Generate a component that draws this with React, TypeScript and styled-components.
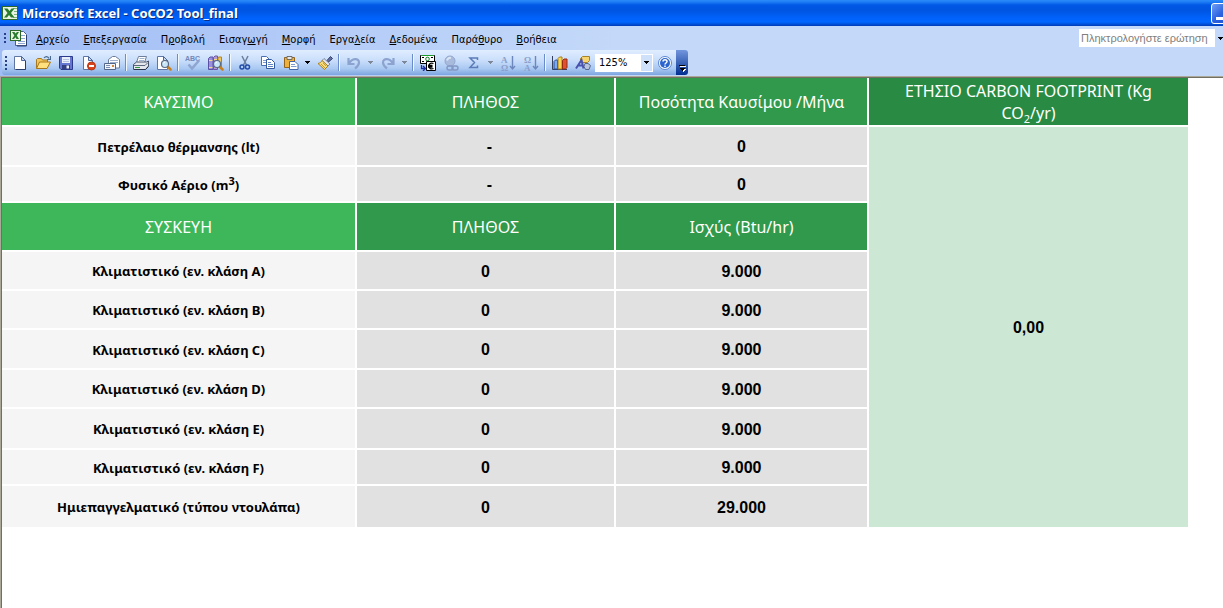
import React from "react";
import styled, { createGlobalStyle } from "styled-components";

const GlobalStyle = createGlobalStyle`
  * { box-sizing: border-box; }
  html, body, #root { height: 100%; }
  body { margin: 0; background: #fff; overflow: hidden; }
`;

const uiFont = `"DejaVu Sans Condensed", "DejaVu Sans", sans-serif`;
const cellFont = `"Noto Sans", "DejaVu Sans", sans-serif`;

const Window = styled.div`
  display: flex;
  flex-direction: column;
  min-height: 100%;
`;

const TitleBar = styled.header`
  display: flex;
  align-items: center;
  height: 26px;
  padding-left: 2px;
  overflow: hidden;
  background: linear-gradient(
    #2a8bfb 0, #1f7cf5 2px, #0058e4 5px, #0054e0 10px,
    #0062fb 18px, #0066ff 22px, #0052dc 24px, #003bb8 26px
  );
`;

const Title = styled.h1`
  flex: 1;
  margin: 0 0 0 4px;
  color: #fff;
  font: 700 13px/18px ${cellFont};
  text-shadow: 1px 1px 0 #0a2a80;
  white-space: nowrap;
`;

const Minimize = styled.button`
  flex: none;
  width: 21px;
  height: 21px;
  margin-right: -9px;
  padding: 0;
  border: 1px solid #fff;
  border-radius: 3px;
  background: linear-gradient(135deg, #6f9ff5, #2a62e0 50%, #1c4fd0);
  svg { display: block; }
`;

const Bars = styled.div`
  padding-bottom: 1px;
  background: linear-gradient(90deg, #a1bdf5, #c4d9f9 620px);
`;

const MenuBar = styled.nav`
  display: flex;
  align-items: center;
  height: 24px;
  padding-left: 4px;
`;

const Grip = styled.span<{ $dots: number }>`
  flex: none;
  width: 2px;
  height: ${(p) => p.$dots * 4 - 2}px;
  background: repeating-linear-gradient(#27408a 0 2px, transparent 2px 4px);
`;

const MenuIcon = styled.span`
  flex: none;
  width: 19px;
  height: 19px;
  margin: 0 8px 0 3px;
  svg { display: block; }
`;

const MenuList = styled.ul`
  display: flex;
  gap: 14px;
  flex: 1;
  margin: 0;
  padding: 0;
  list-style: none;
`;

const MenuButton = styled.button`
  padding: 0;
  border: 0;
  background: none;
  color: #000;
  font: 11px/16px ${uiFont};
  white-space: nowrap;
`;

const Question = styled.div`
  display: flex;
  flex: none;
  width: 144px;
  height: 18px;
`;

const QuestionInput = styled.input`
  flex: 1;
  min-width: 0;
  height: 18px;
  padding: 0 2px;
  border: 0;
  background: #fff;
  font: 11px/18px "Liberation Sans", Arial, sans-serif;
  &::placeholder { color: #808080; opacity: 1; }
`;

const QuestionDrop = styled.button`
  display: flex;
  align-items: center;
  justify-content: flex-end;
  width: 8px;
  padding: 0;
  border: 0;
  background: none;
`;

const ToolRow = styled.div`
  display: flex;
  height: 25px;
  padding-left: 2px;
`;

const ToolBar = styled.div`
  display: flex;
  align-items: center;
  height: 25px;
  padding-left: 3px;
  border-radius: 3px 0 0 3px;
  background: linear-gradient(#e0edff, #cbdffb 40%, #a9c8f2 75%, #7da5e0);
`;

const ToolButton = styled.button<{ $first?: boolean }>`
  display: flex;
  align-items: center;
  justify-content: center;
  flex: none;
  width: 23px;
  height: 22px;
  margin-left: ${(p) => (p.$first ? 1 : 0)}px;
  padding: 0;
  border: 0;
  background: none;
`;

const DropButton = styled(ToolButton)`
  width: 11px;
`;

const Separator = styled.span`
  flex: none;
  width: 2px;
  height: 17px;
  margin: 0 2px;
  border-left: 1px solid #6a8ccb;
  border-right: 1px solid #f1f9ff;
`;

const Zoom = styled.div`
  display: flex;
  align-items: stretch;
  flex: none;
  width: 58px;
  height: 18px;
  margin-left: 1px;
  padding: 1px;
  background: #fff;
`;

const ZoomSelect = styled.select`
  flex: 1;
  min-width: 0;
  height: 16px;
  padding: 0 0 0 3px;
  border: 0;
  appearance: none;
  color: #000;
  background: #fff;
  font: 11px/16px ${uiFont};
`;

const ZoomArrow = styled.span`
  display: flex;
  align-items: center;
  justify-content: center;
  width: 11px;
  background: #cfe0fa;
`;

const BarEnd = styled.button`
  display: flex;
  align-items: flex-end;
  justify-content: center;
  width: 12px;
  height: 25px;
  padding: 0 0 3px;
  border: 0;
  border-radius: 0 3px 3px 0;
  background: linear-gradient(#7396dd, #3c65b8 50%, #002f92);
`;

const Sheet = styled.main`
  flex: 1;
  padding-right: 35px;
  border-top: 1px solid #aca899;
  border-left: 1px solid #aca899;
  box-shadow: inset 1px 1px 0 #716f64;
`;

const SheetInner = styled.div`
  padding: 1px 0 0 1px;
`;

const Grid = styled.table`
  width: 100%;
  table-layout: fixed;
  border-collapse: separate;
  border-spacing: 0;
`;

const Column = styled.col<{ $width?: number }>`
  width: ${(p) => (p.$width ? `${p.$width}px` : "auto")};
`;

const Row = styled.tr<{ $height: number }>`
  height: ${(p) => p.$height}px;
`;

const shades = { light: "#3eb75a", medium: "#31994b", dark: "#298b43" };

const HeadCell = styled.th<{ $shade: keyof typeof shades; $last?: boolean }>`
  padding: 0;
  border: solid #fff;
  border-width: 0 ${(p) => (p.$last ? 0 : 2)}px 2px 0;
  background: ${(p) => shades[p.$shade]};
  color: #fff;
  font: 400 16px/22px ${cellFont};
  text-align: center;
  sub { font-size: 11px; line-height: 0; }
`;

const NameCell = styled.th`
  padding: 1px 0 0;
  border: solid #fff;
  border-width: 0 2px 2px 0;
  background: #f5f5f5;
  color: #000;
  font: 700 13px/18px ${cellFont};
  text-align: center;
  sup { font-size: 11px; line-height: 0; }
`;

const ValueCell = styled.td<{ $dash?: boolean }>`
  padding: 2px 0 0 ${(p) => (p.$dash ? 8 : 0)}px;
  border: solid #fff;
  border-width: 0 2px 2px 0;
  background: #e1e1e1;
  color: #000;
  font: 700 16px/20px "Liberation Sans", Arial, sans-serif;
  text-align: center;
`;

const TotalCell = styled(ValueCell)`
  border-right-width: 0;
  background: #cde7d5;
`;

const Svg = ({ size = 16, children }: { size?: number; children: React.ReactNode }) => (
  <svg width={size} height={size} viewBox={`0 0 ${size} ${size}`} aria-hidden="true">{children}</svg>
);

const Arrow = ({ color = "#000" }: { color?: string }) => (
  <svg width="5" height="3" viewBox="0 0 5 3" shapeRendering="crispEdges" aria-hidden="true">
    <path d="M0 0h5v1H4v1H3v1H2V2H1V1H0z" fill={color} />
  </svg>
);

const ExcelMark = () => (
  <>
    <rect x=".5" y="1.5" width="15" height="13" fill="#eaf4e4" stroke="#2c6a2a" />
    <path d="M11 3.500h4M12 6.500h3M12 9.500h3M11 12.500h4" stroke="#7db777" />
    <path d="M2 3.500h3.500L7.500 6l2-2.500h3L9 8l3.500 4.500H9L7 10l-2 2.500H2L5.500 8z" fill="#2b7d2e" />
  </>
);

const Page = () => (
  <>
    <path d="M2.500 1.500h7l4 4v9h-11z" fill="#fff" stroke="#5f76a5" />
    <path d="M4 14.500h9.500V6" fill="none" stroke="#2b3f6e" />
    <path d="M9.500 1.500v4h4z" fill="#c5d6f2" stroke="#4f6796" />
  </>
);

const Lens = () => (
  <>
    <path d="m11.500 11.500 3 3" stroke="#c97f1c" strokeWidth="2.500" strokeLinecap="round" />
    <circle cx="9" cy="9" r="3.500" fill="#c9e6f8" stroke="#586a84" strokeWidth="1.200" />
    <path d="M7.500 8.500A2 2 0 0 1 9 7" stroke="#fff" fill="none" />
  </>
);

const icons: Record<string, React.ReactNode> = {
  new: <Page />,
  open: (
    <>
      <path d="M1.500 13.500v-9l1-1h4l1 1.500h5v2" fill="#f3c65d" stroke="#a97a1d" />
      <path d="M1.500 13.500 4.500 7h11l-3.500 6.500z" fill="#ffdf7e" stroke="#a8761a" />
      <path d="M9 3c1.500-2 4-2 5 .5M15.500 1v3.500H12" fill="none" stroke="#49698f" strokeWidth="1.200" />
    </>
  ),
  save: (
    <>
      <path d="M1.500 1.500h13v13H3l-1.500-1.500z" fill="#6675d0" stroke="#2c3a8c" />
      <path d="M4 2h8v6H4z" fill="#e9effb" />
      <path d="M5 4.500h6M5 6.500h6" stroke="#b5c2e2" />
      <path d="M4 10h8v4H4z" fill="#343f82" />
      <path d="M8.500 10.500h2.500v3H8.500z" fill="#e9effb" />
    </>
  ),
  permission: (
    <>
      <path d="M2.500 1.500h5l4 4v9h-9z" fill="#fff" stroke="#5f76a5" />
      <path d="M7.500 1.500v4h4z" fill="#c5d6f2" stroke="#4f6796" />
      <circle cx="10.500" cy="11" r="4" fill="#d9421c" stroke="#b8350f" />
      <path d="M8 10h5v2H8z" fill="#fff" />
    </>
  ),
  mail: (
    <>
      <path d="M4.500 8V4.500l4-3h3l4 3V13h-5" fill="#fff" stroke="#6d7c99" />
      <path d="M6 5.500h8M6 7.500h8" stroke="#9fb0cd" />
      <path d="M.5 8.500h11v6H.5z" fill="#f2f6fd" stroke="#54658a" />
      <path d="M2 10.500h4M2 12.500h4" stroke="#7b8db2" />
      <path d="M8 10h2v2H8z" fill="#d88a38" />
    </>
  ),
  print: (
    <>
      <path d="M5.500 1.500h8l-2 6H3.500z" fill="#fff" stroke="#6e7f9c" />
      <path d="M6.500 3.500h5M6 5.500h5" stroke="#9fb2d0" />
      <path d="m.5 9.500 3-2.500h10l2-1v5l-3 3.500H.5z" fill="#e4e8ed" stroke="#47536a" />
      <path d="M1 10.500h11l3-3" stroke="#5b6880" fill="none" />
      <path d="M2 12h5v1H2z" fill="#2b9a3d" />
      <path d="M1 14.500h11.500l3-3" stroke="#27324a" fill="none" />
    </>
  ),
  preview: (
    <>
      <path d="M1.500 1.500h6l4 4v9h-10z" fill="#fff" stroke="#5f76a5" />
      <path d="M7.500 1.500v4h4z" fill="#c5d6f2" stroke="#4f6796" />
      <Lens />
    </>
  ),
  spelling: (
    <>
      <text x="0" y="6" fontFamily="Liberation Sans, sans-serif" fontSize="7" fontWeight="700" fill="#7088ba">ABC</text>
      <path d="m3.500 9.500 3.500 4L14 5.500" fill="none" stroke="#8ea5d2" strokeWidth="2.500" />
    </>
  ),
  research: (
    <>
      <path d="M.5 3.500 2 2h3v12.500H.5z" fill="#9b90dc" stroke="#5a50a6" />
      <path d="M5.500 2.500 7 1h2.500v13.500h-4z" fill="#b39ad4" stroke="#6b56a8" />
      <path d="M10 2.500 11 2h2.500v10H10z" fill="#f0c65e" stroke="#b18526" />
      <path d="M1 5.500h3.500M1 12.500h3.500M6 4.500h3" stroke="#f3dc7f" />
      <Lens />
    </>
  ),
  cut: (
    <>
      <path d="m5 1 4.500 9M11 1 6.500 10" stroke="#6d7f9f" strokeWidth="1.500" />
      <circle cx="5" cy="12" r="2" fill="none" stroke="#234ba8" strokeWidth="1.500" />
      <circle cx="10.500" cy="12" r="2" fill="none" stroke="#234ba8" strokeWidth="1.500" />
    </>
  ),
  copy: (
    <>
      <path d="M1.500 1.500h5l3 3v6h-8z" fill="#fff" stroke="#4a70b4" />
      <path d="M3 5.500h4M3 7.500h4" stroke="#7c9bd3" />
      <path d="M6.500 4.500h5l3 3v6h-8z" fill="#fff" stroke="#34589e" />
      <path d="M8 7.500h3M8 9.500h5M8 11.500h5" stroke="#5d82c6" />
    </>
  ),
  paste: (
    <>
      <path d="M1.500 2.500h10v10h-10z" fill="#eeb23a" stroke="#94631a" />
      <path d="M4 1.500h5v3H4z" fill="#e8e8e8" stroke="#6e6e6e" />
      <path d="M6.500 6.500h5.500l3 3v5H6.500z" fill="#fff" stroke="#4467a8" />
      <path d="M8 9.500h4M8 11.500h5.500" stroke="#7e9bd0" />
    </>
  ),
  painter: (
    <>
      <path d="m10 5.500 3.500-4 2 2-4 3.500z" fill="#6470a2" stroke="#33406b" />
      <path d="m7 3.500 6 5.500-2 2L5 5.500z" fill="#e2e5ec" stroke="#67718b" strokeWidth=".8" />
      <path d="M5 5.500 11 11 7.500 14.500 1 8.500C3 8 4.500 7 5 5.500z" fill="#f6dc7a" stroke="#a98021" />
      <path d="m4 9 4 4M6 8l3 3" stroke="#c59c31" />
    </>
  ),
  undo: (
    <path d="M2.500 3v6h6M3 8.500C6 3 13 2.500 13 7.500c0 3-2 4.500-4 6" fill="none" stroke="#8da3cf" strokeWidth="2.200" />
  ),
  redo: (
    <path d="M13.500 3v6h-6M13 8.500C10 3 3 2.500 3 7.500c0 3 2 4.500 4 6" fill="none" stroke="#8da3cf" strokeWidth="2.200" />
  ),
  euro: (
    <>
      <path d="M.5.500h14v8H.5z" fill="#fff" stroke="#000" />
      <path d="M1 0h13v1H1z" fill="#1d9a2c" />
      <circle cx="7.500" cy="4" r="1.800" fill="none" stroke="#177b2a" />
      <path d="M2 2.500h2M11 2.500h2M2 6.500h2" stroke="#000" />
      <path d="M6.500 6.500h9v9h-9z" fill="#fff" stroke="#000" />
      <path d="M13.500 8.500c-3-1.200-4.500.5-4.500 2.500s1.500 3.700 4.500 2.500M8 10.500h4.500M8 12h4.500" fill="none" stroke="#000" strokeWidth="1.300" />
      <path d="M1.500 10v3.500H5M3 11l2.500 2.500L3 16" fill="none" stroke="#1c2fa8" strokeWidth="1.300" />
    </>
  ),
  link: (
    <>
      <circle cx="7" cy="6" r="5" fill="#a9bbdc" stroke="#93a6cd" />
      <path d="M4 5.500C4.500 3.500 6 2.500 8 3" stroke="#dbe5f6" strokeWidth="2" fill="none" />
      <rect x="4" y="11" width="6" height="4" rx="2" fill="none" stroke="#8297c2" strokeWidth="1.400" />
      <rect x="9" y="11" width="6" height="4" rx="2" fill="none" stroke="#8297c2" strokeWidth="1.400" />
    </>
  ),
  sum: (
    <path d="M11.500 5V3H4l4.500 4.500L4 12.500h7.500v-2" fill="none" stroke="#5c7bb8" strokeWidth="1.500" />
  ),
  sortAsc: (
    <>
      <text x="1" y="7.500" fontFamily="Liberation Serif, serif" fontSize="9" fontWeight="700" fill="#8a9fcb">Α</text>
      <text x="1" y="15.500" fontFamily="Liberation Serif, serif" fontSize="9" fontWeight="700" fill="#8a9fcb">Ω</text>
      <path d="M12.500 1v12M10 11l2.500 3 2.500-3" fill="none" stroke="#6d87bd" strokeWidth="1.400" />
    </>
  ),
  sortDesc: (
    <>
      <text x="1" y="7.500" fontFamily="Liberation Serif, serif" fontSize="9" fontWeight="700" fill="#8a9fcb">Ω</text>
      <text x="1" y="15.500" fontFamily="Liberation Serif, serif" fontSize="9" fontWeight="700" fill="#8a9fcb">Α</text>
      <path d="M12.500 1v12M10 11l2.500 3 2.500-3" fill="none" stroke="#6d87bd" strokeWidth="1.400" />
    </>
  ),
  chart: (
    <>
      <path d="M.5 1v13.500H15" fill="none" stroke="#33415f" />
      <path d="M2 6.500 3.500 5H5.500v9H2z" fill="#7fa9ee" stroke="#274f9e" />
      <path d="M6 3.500 7.500 2H10v12H6z" fill="#f9d755" stroke="#a97e17" />
      <path d="M10.500 5.500 12 4h3v8.500L13.500 14h-3z" fill="#e2512f" stroke="#962b12" />
    </>
  ),
  drawing: (
    <>
      <path d="m5.500 3.500 2-2h7v4l-2 2h-7z" fill="#f6d571" stroke="#a88227" />
      <path d="M10 8.500h3l2.500 2-1.500 4h-3.500l-1.500-3z" fill="#b9c5de" stroke="#56668f" />
      <path d="M1 13.500 6.500 5l2 8.500M3.500 10.500h5" fill="none" stroke="#4a52b0" strokeWidth="2" />
    </>
  ),
  help: (
    <>
      <circle cx="8" cy="8" r="6.500" fill="#fff" stroke="#5a86d4" />
      <circle cx="8" cy="8" r="5" fill="#2b66cf" />
      <path d="M6 6.500C6 4 10 4 10 6.500 10 8 8 8 8 9.500M8 10.500V12" fill="none" stroke="#fff" strokeWidth="1.500" />
    </>
  ),
};

type Tool = { kind: "button" | "drop" | "sep"; icon?: string; label?: string; muted?: boolean };
const b = (icon: string, label: string): Tool => ({ kind: "button", icon, label });
const d = (label: string, muted = false): Tool => ({ kind: "drop", label, muted });
const sep: Tool = { kind: "sep" };

const tools: Tool[] = [
  b("new", "Δημιουργία"), b("open", "Άνοιγμα"), b("save", "Αποθήκευση"), b("permission", "Δικαιώματα"), b("mail", "Αποστολή"), sep,
  b("print", "Εκτύπωση"), b("preview", "Προεπισκόπηση"), sep,
  b("spelling", "Ορθογραφία"), b("research", "Έρευνα"), sep,
  b("cut", "Αποκοπή"), b("copy", "Αντιγραφή"), b("paste", "Επικόλληση"), d("Επιλογές επικόλλησης"), b("painter", "Πινέλο μορφοποίησης"), sep,
  b("undo", "Αναίρεση"), d("Λίστα αναίρεσης", true), b("redo", "Επανάληψη"), d("Λίστα επανάληψης", true), sep,
  b("euro", "Μετατροπή σε ευρώ"), b("link", "Υπερ-σύνδεση"), b("sum", "Άθροιση"), d("Συναρτήσεις", true),
  b("sortAsc", "Αύξουσα ταξινόμηση"), b("sortDesc", "Φθίνουσα ταξινόμηση"), sep,
  b("chart", "Γράφημα"), b("drawing", "Σχεδίαση"),
];

/* Each entry is the text before, at and after the underlined access key. */
const menus = [
  ["", "Α", "ρχείο"], ["", "Ε", "πεξεργασία"], ["Π", "ρ", "οβολή"], ["Εισαγ", "ω", "γή"], ["", "Μ", "ορφή"],
  ["Εργα", "λ", "εία"], ["", "Δ", "εδομένα"], ["Παρά", "θ", "υρο"], ["", "Β", "οήθεια"],
];

const fuels = [
  { name: <>Πετρέλαιο θέρμανσης (lt)</>, count: "-", amount: "0", height: 40 },
  { name: <>Φυσικό Αέριο (m<sup>3</sup>)</>, count: "-", amount: "0", height: 36 },
];

const devices = [
  { name: "Κλιματιστικό (εν. κλάση A)", power: "9.000", height: 39 },
  { name: "Κλιματιστικό (εν. κλάση B)", power: "9.000", height: 39 },
  { name: "Κλιματιστικό (εν. κλάση C)", power: "9.000", height: 40 },
  { name: "Κλιματιστικό (εν. κλάση D)", power: "9.000", height: 39 },
  { name: "Κλιματιστικό (εν. κλάση E)", power: "9.000", height: 41 },
  { name: "Κλιματιστικό (εν. κλάση F)", power: "9.000", height: 36 },
  { name: "Ημιεπαγγελματικό (τύπου ντουλάπα)", power: "29.000", height: 43 },
];

export default function App() {
  return (
    <Window>
      <GlobalStyle />
      <TitleBar>
        <Svg><ExcelMark /></Svg>
        <Title>Microsoft Excel - CoCO2 Tool_final</Title>
        <Minimize aria-label="Ελαχιστοποίηση">
          <Svg size={19}><path d="M4 13h7v3H4z" fill="#fff" /></Svg>
        </Minimize>
      </TitleBar>
      <Bars>
        <MenuBar>
          <Grip $dots={3} />
          <MenuIcon>
            <Svg size={19}>
              <path d="M6.500 2.500h8l3 3v11h-11z" fill="#fff" stroke="#4a5f92" />
              <path d="M12 6.500h4M12 9.500h4M9 12.500h7M9 14.500h7" stroke="#8da6d6" />
              <path d="M17.500 6v11H8" fill="none" stroke="#2b3f6e" />
              <rect x="1.500" y="1.500" width="10" height="10" fill="#eaf4e4" stroke="#2c6a2a" />
              <path d="M3 3h2.500l1 1.500L8 3h2L7.800 6.500 10 10H7.500l-1-1.700L5 10H3l2.300-3.500z" fill="#2b7d2e" />
            </Svg>
          </MenuIcon>
          <MenuList>
            {menus.map(([before, key, after]) => (
              <li key={before + key + after}>
                <MenuButton>{before}<u>{key}</u>{after}</MenuButton>
              </li>
            ))}
          </MenuList>
          <Question>
            <QuestionInput aria-label="Ερώτηση" placeholder="Πληκτρολογήστε ερώτηση" />
            <QuestionDrop aria-label="Πρόσφατες ερωτήσεις"><Arrow /></QuestionDrop>
          </Question>
        </MenuBar>
        <ToolRow>
          <ToolBar>
            <Grip $dots={4} />
            {tools.map((tool, i) => {
              if (tool.kind === "sep") return <Separator key={i} />;
              if (tool.kind === "drop")
                return <DropButton key={i} aria-label={tool.label}><Arrow color={tool.muted ? "#7d8798" : "#000"} /></DropButton>;
              return <ToolButton key={i} $first={i === 0} aria-label={tool.label}><Svg>{icons[tool.icon!]}</Svg></ToolButton>;
            })}
            <Zoom>
              <ZoomSelect aria-label="Ζουμ" defaultValue="125%">
                <option>125%</option>
              </ZoomSelect>
              <ZoomArrow><Arrow /></ZoomArrow>
            </Zoom>
            <ToolButton aria-label="Βοήθεια"><Svg>{icons.help}</Svg></ToolButton>
          </ToolBar>
          <BarEnd aria-label="Επιλογές γραμμής εργαλείων">
            <svg width="7" height="7" viewBox="0 0 7 7" shapeRendering="crispEdges" aria-hidden="true">
              <path d="M1 1h6v1H1zM2 4h5v1H6v1H5v1H4V6H3V5H2z" fill="#fff" />
              <path d="M0 0h6v1H0zM1 3h5v1H5v1H4v1H3V5H2V4H1z" fill="#000" />
            </svg>
          </BarEnd>
        </ToolRow>
      </Bars>
      <Sheet>
        <SheetInner>
          <Grid>
            <colgroup>
              <Column $width={355} />
              <Column $width={259} />
              <Column $width={253} />
              <Column />
            </colgroup>
            <tbody>
              <Row $height={49}>
                <HeadCell scope="col" $shade="light">ΚΑΥΣΙΜΟ</HeadCell>
                <HeadCell scope="col" $shade="medium">ΠΛΗΘΟΣ</HeadCell>
                <HeadCell scope="col" $shade="medium">Ποσότητα Καυσίμου /Μήνα</HeadCell>
                <HeadCell scope="col" $shade="dark" $last>
                  ΕΤΗΣΙΟ CARBON FOOTPRINT (Kg<br />CO<sub>2</sub>/yr)
                </HeadCell>
              </Row>
              {fuels.map((fuel, i) => (
                <Row key={i} $height={fuel.height}>
                  <NameCell scope="row">{fuel.name}</NameCell>
                  <ValueCell $dash>{fuel.count}</ValueCell>
                  <ValueCell>{fuel.amount}</ValueCell>
                  {i === 0 && <TotalCell rowSpan={fuels.length + devices.length + 1}>0,00</TotalCell>}
                </Row>
              ))}
              <Row $height={49}>
                <HeadCell scope="col" $shade="light">ΣΥΣΚΕΥΗ</HeadCell>
                <HeadCell scope="col" $shade="medium">ΠΛΗΘΟΣ</HeadCell>
                <HeadCell scope="col" $shade="medium">Ισχύς (Btu/hr)</HeadCell>
              </Row>
              {devices.map((device) => (
                <Row key={device.name} $height={device.height}>
                  <NameCell scope="row">{device.name}</NameCell>
                  <ValueCell>0</ValueCell>
                  <ValueCell>{device.power}</ValueCell>
                </Row>
              ))}
            </tbody>
          </Grid>
        </SheetInner>
      </Sheet>
    </Window>
  );
}
